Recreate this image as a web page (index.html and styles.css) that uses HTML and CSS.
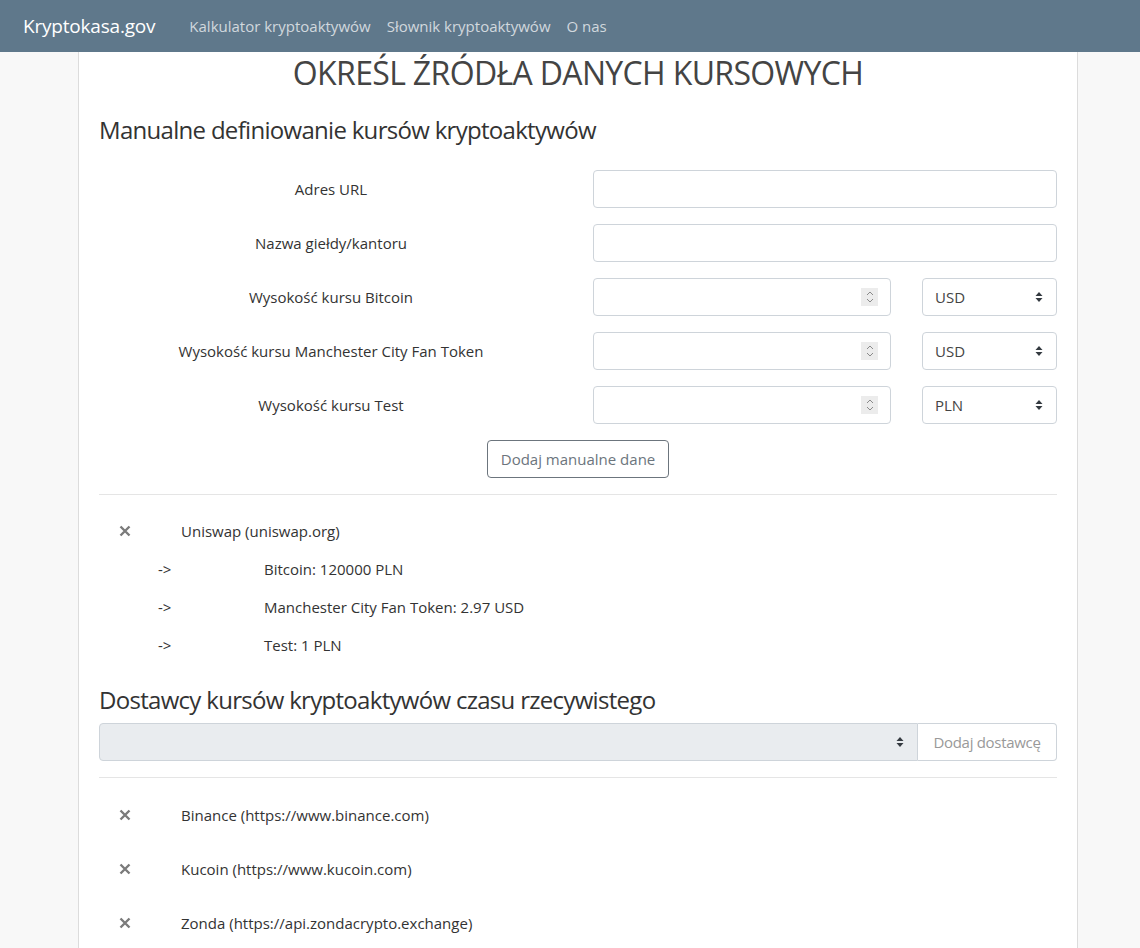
FILE: index.html
```html
<!DOCTYPE html>
<html lang="pl">
<head>
<meta charset="utf-8">
<title>Kryptokasa.gov</title>
<link rel="stylesheet" href="styles.css">
</head>
<body>
<nav class="navbar">
  <a class="brand" href="#">Kryptokasa.gov</a>
  <a class="nav-link" href="#">Kalkulator kryptoaktywów</a>
  <a class="nav-link" href="#">Słownik kryptoaktywów</a>
  <a class="nav-link" href="#">O nas</a>
</nav>
<main class="container">
  <h1 class="title">OKREŚL ŹRÓDŁA DANYCH KURSOWYCH</h1>
  <h3 class="section">Manualne definiowanie kursów kryptoaktywów</h3>

  <div class="form">
    <div class="form-row">
      <label class="label">Adres URL</label>
      <div class="control"><input class="input" type="text"></div>
    </div>
    <div class="form-row">
      <label class="label">Nazwa giełdy/kantoru</label>
      <div class="control"><input class="input" type="text"></div>
    </div>
    <div class="form-row">
      <label class="label">Wysokość kursu Bitcoin</label>
      <div class="control split">
        <div class="num"><input class="input" type="text"><span class="spin"><svg width="10" height="14" viewBox="0 0 10 14"><path d="M2 5 L5 2 L8 5 M2 9 L5 12 L8 9" fill="none" stroke="#8a8a8a" stroke-width="1"/></svg></span></div>
        <div class="select"><span>USD</span><svg width="8" height="12" viewBox="0 0 8 12"><path d="M0.5 5 L4 1 L7.5 5 Z M0.5 7 L4 11 L7.5 7 Z" fill="#343a40"/></svg></div>
      </div>
    </div>
    <div class="form-row">
      <label class="label">Wysokość kursu Manchester City Fan Token</label>
      <div class="control split">
        <div class="num"><input class="input" type="text"><span class="spin"><svg width="10" height="14" viewBox="0 0 10 14"><path d="M2 5 L5 2 L8 5 M2 9 L5 12 L8 9" fill="none" stroke="#8a8a8a" stroke-width="1"/></svg></span></div>
        <div class="select"><span>USD</span><svg width="8" height="12" viewBox="0 0 8 12"><path d="M0.5 5 L4 1 L7.5 5 Z M0.5 7 L4 11 L7.5 7 Z" fill="#343a40"/></svg></div>
      </div>
    </div>
    <div class="form-row">
      <label class="label">Wysokość kursu Test</label>
      <div class="control split">
        <div class="num"><input class="input" type="text"><span class="spin"><svg width="10" height="14" viewBox="0 0 10 14"><path d="M2 5 L5 2 L8 5 M2 9 L5 12 L8 9" fill="none" stroke="#8a8a8a" stroke-width="1"/></svg></span></div>
        <div class="select"><span>PLN</span><svg width="8" height="12" viewBox="0 0 8 12"><path d="M0.5 5 L4 1 L7.5 5 Z M0.5 7 L4 11 L7.5 7 Z" fill="#343a40"/></svg></div>
      </div>
    </div>
    <div class="btn-row"><button class="btn-outline">Dodaj manualne dane</button></div>
  </div>

  <hr class="divider">

  <ul class="list manual">
    <li class="item"><span class="x"><svg width="12" height="12" viewBox="0 0 12 12"><path d="M1.5 1.5 L10.5 10.5 M10.5 1.5 L1.5 10.5" stroke="#7b7b7b" stroke-width="2.4"/></svg></span><span class="name">Uniswap (uniswap.org)</span></li>
    <li class="sub"><span class="arrow">-&gt;</span><span class="val">Bitcoin: 120000 PLN</span></li>
    <li class="sub"><span class="arrow">-&gt;</span><span class="val">Manchester City Fan Token: 2.97 USD</span></li>
    <li class="sub"><span class="arrow">-&gt;</span><span class="val">Test: 1 PLN</span></li>
  </ul>

  <h3 class="section second">Dostawcy kursów kryptoaktywów czasu rzecywistego</h3>
  <div class="input-group">
    <div class="select grey"><span></span><svg width="8" height="12" viewBox="0 0 8 12"><path d="M0.5 5 L4 1 L7.5 5 Z M0.5 7 L4 11 L7.5 7 Z" fill="#343a40"/></svg></div>
    <button class="btn-add">Dodaj dostawcę</button>
  </div>

  <hr class="divider second-hr">

  <ul class="list providers">
    <li class="item"><span class="x"><svg width="12" height="12" viewBox="0 0 12 12"><path d="M1.5 1.5 L10.5 10.5 M10.5 1.5 L1.5 10.5" stroke="#7b7b7b" stroke-width="2.4"/></svg></span><span class="name">Binance (https://www.binance.com)</span></li>
    <li class="item"><span class="x"><svg width="12" height="12" viewBox="0 0 12 12"><path d="M1.5 1.5 L10.5 10.5 M10.5 1.5 L1.5 10.5" stroke="#7b7b7b" stroke-width="2.4"/></svg></span><span class="name">Kucoin (https://www.kucoin.com)</span></li>
    <li class="item"><span class="x"><svg width="12" height="12" viewBox="0 0 12 12"><path d="M1.5 1.5 L10.5 10.5 M10.5 1.5 L1.5 10.5" stroke="#7b7b7b" stroke-width="2.4"/></svg></span><span class="name">Zonda (https://api.zondacrypto.exchange)</span></li>
  </ul>
</main>
</body>
</html>
```

FILE: styles.css
```css
* { box-sizing: border-box; }
html, body { margin: 0; padding: 0; }
body {
  background: #f8f8f8;
  font-family: "Open Sans", "Noto Sans", "Liberation Sans", sans-serif;
  font-size: 15px;
  color: #333;
  height: 948px;
  overflow: hidden;
}
.navbar {
  height: 52px;
  background: #5f788b;
  display: flex;
  align-items: center;
  padding: 0 23px;
}
.brand {
  color: #fff;
  font-size: 19px;
  text-decoration: none;
  margin-right: 34px;
  letter-spacing: -0.2px;
}
.nav-link {
  color: rgba(255,255,255,0.72);
  text-decoration: none;
  font-size: 15px;
  margin-right: 16px;
}
.container {
  width: 1000px;
  margin: 0 0 0 78px;
  background: #fff;
  border-left: 1px solid #dcdcdc;
  border-right: 1px solid #dcdcdc;
  padding: 0 20px 1px;
  min-height: 896px;
}
.title {
  margin: 0;
  padding-top: 2px;
  text-align: center;
  font-weight: 400;
  font-size: 32px;
  line-height: 38px;
  color: #444;
  letter-spacing: -0.65px;
}
.section {
  margin: 22px 0 0;
  font-weight: 400;
  font-size: 24px;
  line-height: 32px;
  color: #333;
  letter-spacing: -0.7px;
}
.form { margin-top: 24px; }
.form-row {
  display: grid;
  grid-template-columns: 1fr 1fr;
  column-gap: 30px;
  align-items: center;
  margin-bottom: 16px;
}
.label {
  text-align: center;
  font-size: 15px;
}
.control { display: flex; }
.control.split { gap: 31px; }
.input {
  width: 100%;
  height: 38px;
  border: 1px solid #ced4da;
  border-radius: 4px;
  background: #fff;
  font: inherit;
  padding: 0 12px;
  display: block;
}
.num { position: relative; flex: 1; }
.spin {
  position: absolute;
  right: 13px;
  top: 10px;
  width: 17px;
  height: 18px;
  background: #ececec;
  display: flex;
  align-items: center;
  justify-content: center;
}
.select {
  width: 135px;
  height: 38px;
  border: 1px solid #ced4da;
  border-radius: 4px;
  display: flex;
  align-items: center;
  justify-content: space-between;
  padding: 0 13px 0 12px;
  color: #444;
  font-size: 15px;
}
.btn-row { display: flex; justify-content: center; }
.btn-outline {
  font: inherit;
  font-size: 15px;
  color: #6c757d;
  background: #fff;
  border: 1px solid #6c757d;
  border-radius: 4px;
  height: 38px;
  padding: 0 13px;
}
.divider {
  border: 0;
  border-top: 1px solid #e5e5e5;
  margin: 16px 0 0;
}
.list { list-style: none; margin: 0; padding: 0; }
.manual { padding-top: 17px; }
.item, .sub {
  display: flex;
  align-items: center;
  height: 38px;
  font-size: 15px;
}
.x {
  width: 82px;
  padding-left: 20px;
  display: flex;
  align-items: center;
}
.arrow { width: 165px; padding-left: 59px; }
.section.second { margin-top: 20px; }
.input-group { display: flex; margin-top: 7px; }
.select.grey {
  flex: 1;
  width: auto;
  background: #e9ecef;
  border-radius: 4px 0 0 4px;
}
.btn-add {
  font: inherit;
  font-size: 15px;
  color: #999;
  background: #fff;
  border: 1px solid #ced4da;
  border-left: 0;
  border-radius: 0 4px 4px 0;
  height: 38px;
  width: 139px;
  padding: 0 11px;
  letter-spacing: -0.3px;
}
.second-hr { margin-top: 16px; }
.providers { padding-top: 10px; }
.providers .item { height: 54px; }
```
